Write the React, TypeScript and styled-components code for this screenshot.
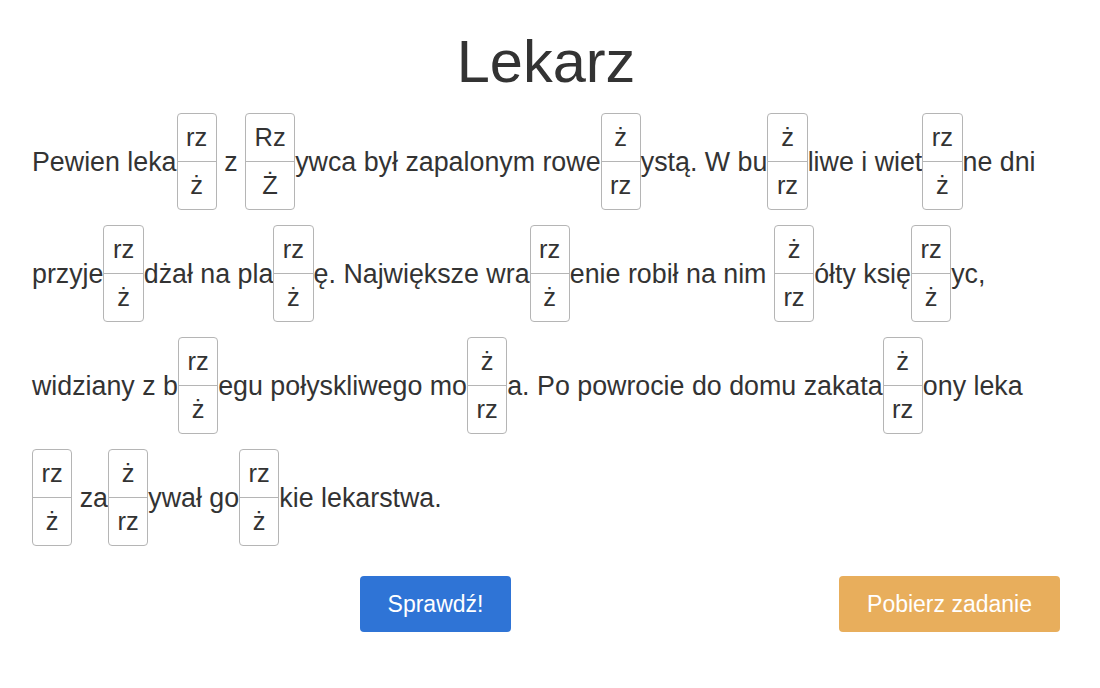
import React, { useState } from 'react'
import styled, { createGlobalStyle } from 'styled-components'

type Piece = string | { a: string; b: string }

const TEXT: Piece[] = [
  'Pewien leka',
  { a: 'rz', b: 'ż' },
  ' z ',
  { a: 'Rz', b: 'Ż' },
  'ywca był zapalonym rowe',
  { a: 'ż', b: 'rz' },
  'ystą. W bu',
  { a: 'ż', b: 'rz' },
  'liwe i wiet',
  { a: 'rz', b: 'ż' },
  'ne dni przyje',
  { a: 'rz', b: 'ż' },
  'dżał na pla',
  { a: 'rz', b: 'ż' },
  'ę. Największe wra',
  { a: 'rz', b: 'ż' },
  'enie robił na nim ',
  { a: 'ż', b: 'rz' },
  'ółty księ',
  { a: 'rz', b: 'ż' },
  'yc, widziany z b',
  { a: 'rz', b: 'ż' },
  'egu połyskliwego mo',
  { a: 'ż', b: 'rz' },
  'a. Po powrocie do domu zakata',
  { a: 'ż', b: 'rz' },
  'ony leka ',
  { a: 'rz', b: 'ż' },
  ' za',
  { a: 'ż', b: 'rz' },
  'ywał go',
  { a: 'rz', b: 'ż' },
  'kie lekarstwa.',
]

const GlobalStyle = createGlobalStyle`
  body {
    margin: 0;
    background: #fff;
    font-family: "Liberation Sans", Arial, sans-serif;
    color: #333;
  }
`

export default function App() {
  const [picked, setPicked] = useState<Record<number, 'a' | 'b'>>({})
  return (
    <Page>
      <GlobalStyle />
      <Title>Lekarz</Title>
      <Passage>
        {TEXT.map((p, i) =>
          typeof p === 'string' ? (
            <React.Fragment key={i}>{p}</React.Fragment>
          ) : (
            <Choice key={i}>
              <Option selected={picked[i] === 'a'} onClick={() => setPicked({ ...picked, [i]: 'a' })}>
                {p.a}
              </Option>
              <Option lower selected={picked[i] === 'b'} onClick={() => setPicked({ ...picked, [i]: 'b' })}>
                {p.b}
              </Option>
            </Choice>
          )
        )}
      </Passage>
      <Actions>
        <CheckSlot>
          <Button color="#2f74d6">Sprawdź!</Button>
        </CheckSlot>
        <Button color="#e8ae5c">Pobierz zadanie</Button>
      </Actions>
    </Page>
  )
}

const Page = styled.div`
  padding: 0 32px;
`

const Title = styled.h1`
  margin: 0;
  padding: 28px 8px 0 0;
  text-align: center;
  font-size: 59.5px;
  font-weight: 400;
  line-height: 68px;
`

const Passage = styled.p`
  margin: 0;
  padding-top: 10px;
  font-size: 26.8px;
  line-height: 112px;
`

const Choice = styled.span`
  display: inline-flex;
  flex-direction: column;
  vertical-align: middle;
  border: 1px solid #b5b5b5;
  border-radius: 4px;
  line-height: 47px;
  text-align: center;
  margin-top: -4px;
`

const Option = styled.span<{ lower?: boolean; selected?: boolean }>`
  display: block;
  padding: 0 8.5px;
  height: 47px;
  cursor: pointer;
  font-size: 25.5px;
  border-top: ${({ lower }) => (lower ? '1px solid #b5b5b5' : 'none')};
  background: ${({ selected }) => (selected ? '#e6eefb' : 'transparent')};
`

const Actions = styled.div`
  display: flex;
  align-items: center;
  margin-top: 22px;
  padding-right: 8px;
`

const CheckSlot = styled.div`
  flex: 1;
  display: flex;
  justify-content: center;
`

const Button = styled.button<{ color: string }>`
  background: ${({ color }) => color};
  color: #fff;
  border: none;
  border-radius: 4px;
  height: 56px;
  padding: 0 28px;
  font-family: "Liberation Sans", Arial, sans-serif;
  font-size: 23px;
  cursor: pointer;
`
